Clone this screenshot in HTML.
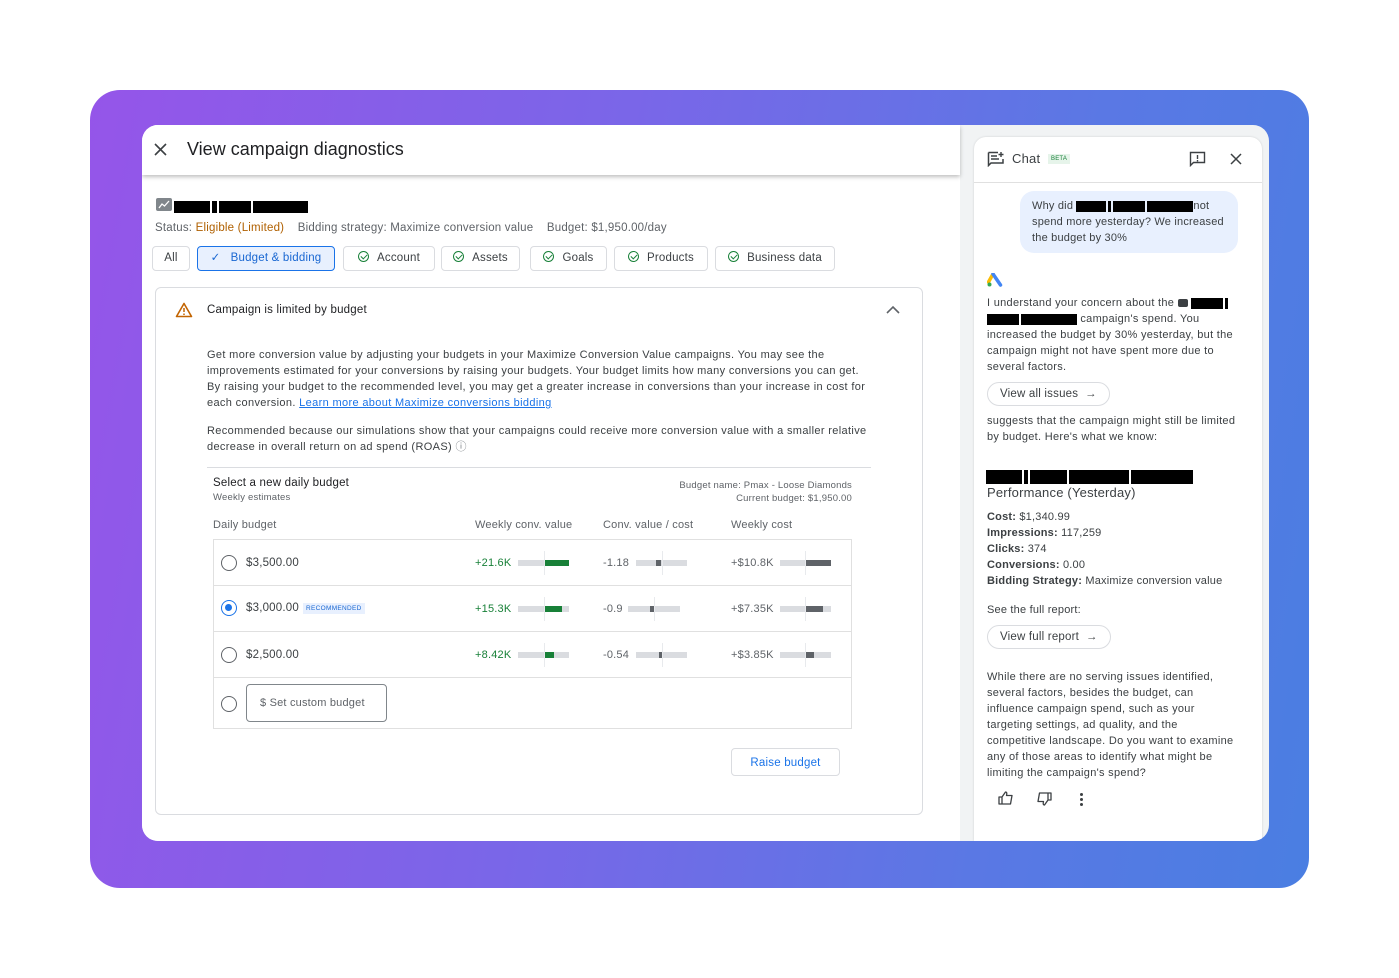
<!DOCTYPE html>
<html><head><meta charset="utf-8"><style>
*{box-sizing:border-box;margin:0;padding:0}
body{width:1399px;height:978px;background:#fff;font-family:"Liberation Sans",sans-serif;color:#3c4043;position:relative;overflow:hidden;letter-spacing:.2px}
.a{position:absolute}
.bg{left:90px;top:90px;width:1219px;height:798px;border-radius:30px;background:linear-gradient(100deg,#9555e9 0%,#7a66e8 40%,#5a78e4 75%,#4a7ee2 100%)}
.panel{left:142px;top:125px;width:1127px;height:716px;border-radius:16px;background:#f1f3f4;overflow:hidden}
.left{left:0;top:0;width:818px;height:716px;background:#fff}
.hdr{left:0;top:0;width:818px;height:50px;box-shadow:0 2px 4px rgba(0,0,0,.25);background:#fff}
.t{font-size:12px;color:#3c4043;white-space:nowrap}
.chip{position:absolute;top:121px;height:25px;border:1px solid #dadce0;border-radius:4px;font-size:11.5px;line-height:23px;text-align:center;color:#3c4043;white-space:nowrap}
.chk{display:inline-block;width:11px;height:11px;border:1.3px solid #188038;border-radius:50%;vertical-align:-1px;margin-right:8px;position:relative}
.chk:after{content:"";position:absolute;left:2.5px;top:1px;width:3px;height:5px;border:solid #188038;border-width:0 1.2px 1.2px 0;transform:rotate(45deg)}
.blk{background:#000;display:inline-block;height:12px;vertical-align:middle}
.row{position:absolute;left:71px;width:639px;height:46px;border-top:1px solid #e0e0e0}
.radio{position:absolute;left:8px;width:16px;height:16px;border:1.5px solid #5f6368;border-radius:50%}
.bar{position:absolute;height:6px;background:#dadce0}
.bar i{position:absolute;top:0;height:6px;display:block}
.tick{position:absolute;width:1px;height:24px;background:#e8eaed;top:-9px}
.chat{left:832px;top:12px;width:288px;height:704px;background:#fff;border-radius:12px 12px 0 0;box-shadow:0 0 2px rgba(0,0,0,.15)}
.ct{font-size:11px;line-height:16px;color:#3c4043}
.pill{position:absolute;height:24px;border:1px solid #dadce0;border-radius:12px;font-size:11.5px;line-height:22px;padding:0 12px;color:#3c4043}
</style></head><body>
<div class="a bg"></div>
<div class="a panel">
 <div class="a left">
  <div class="a hdr">
   <svg class="a" style="left:12px;top:18px" width="13" height="13" viewBox="0 0 13 13"><path d="M1 1L12 12M12 1L1 12" stroke="#3c4043" stroke-width="1.6"/></svg>
   <div class="a" style="left:45px;top:14px;font-size:18px;color:#202124;letter-spacing:0">View campaign diagnostics</div>
  </div>
  <svg class="a" style="left:14px;top:73px" width="16" height="13" viewBox="0 0 16 13"><rect width="16" height="13" rx="2" fill="#80868b"/><path d="M3 10L6 6L8.5 8L13 3" fill="none" stroke="#fff" stroke-width="1.3"/></svg>
  <div class="a" style="left:32px;top:73px"><span class="blk" style="width:36px"></span><span class="blk" style="width:5px;margin-left:2px"></span><span class="blk" style="width:32px;margin-left:2px"></span><span class="blk" style="width:55px;margin-left:2px"></span></div>
  <div class="a t" style="left:13px;top:97px;font-size:11.5px;color:#5f6368">Status: <span style="color:#b06000">Eligible (Limited)</span> &nbsp;&nbsp; Bidding strategy: Maximize conversion value &nbsp;&nbsp; Budget: $1,950.00/day</div>
  <div class="chip" style="left:10px;width:38px">All</div>
  <div class="chip" style="left:55px;width:138px;background:#e8f0fe;border-color:#1a73e8;color:#1967d2">✓&nbsp;&nbsp; Budget &amp; bidding</div>
  <div class="chip" style="left:201px;width:92px"><span class="chk"></span>Account</div>
  <div class="chip" style="left:299px;width:79px"><span class="chk"></span>Assets</div>
  <div class="chip" style="left:388px;width:77px"><span class="chk"></span>Goals</div>
  <div class="chip" style="left:472px;width:94px"><span class="chk"></span>Products</div>
  <div class="chip" style="left:573px;width:120px"><span class="chk"></span>Business data</div>
  <div class="a" style="left:13px;top:162px;width:768px;height:528px;border:1px solid #dadce0;border-radius:6px"></div>
  <svg class="a" style="left:33px;top:177px" width="18" height="16" viewBox="0 0 18 16"><path d="M9 1.5L16.5 14.5H1.5Z" fill="none" stroke="#c26401" stroke-width="1.6" stroke-linejoin="round"/><path d="M9 6V10M9 11.5V13" stroke="#c26401" stroke-width="1.5"/></svg>
  <div class="a t" style="left:65px;top:179px;font-size:11.5px;color:#202124">Campaign is limited by budget</div>
  <svg class="a" style="left:744px;top:180px" width="14" height="9" viewBox="0 0 14 9"><path d="M1 8L7 2L13 8" fill="none" stroke="#5f6368" stroke-width="1.6"/></svg>
  <div class="a ct" style="left:65px;top:222px;width:665px;font-size:11px;line-height:16px;letter-spacing:.35px">Get more conversion value by adjusting your budgets in your Maximize Conversion Value campaigns. You may see the improvements estimated for your conversions by raising your budgets. Your budget limits how many conversions you can get. By raising your budget to the recommended level, you may get a greater increase in conversions than your increase in cost for each conversion. <span style="color:#1a73e8;text-decoration:underline">Learn more about Maximize conversions bidding</span></div>
  <div class="a ct" style="left:65px;top:298px;width:665px;letter-spacing:.35px">Recommended because our simulations show that your campaigns could receive more conversion value with a smaller relative decrease in overall return on ad spend (ROAS) <span style="color:#80868b">ⓘ</span></div>
  <div class="a" style="left:65px;top:342px;width:664px;height:1px;background:#dadce0"></div>
  <div class="a t" style="left:71px;top:352px;font-size:11.5px;color:#202124">Select a new daily budget</div>
  <div class="a t" style="left:71px;top:367px;font-size:9.5px;color:#5f6368">Weekly estimates</div>
  <div class="a t" style="left:480px;top:354px;width:230px;text-align:right;font-size:9.5px;line-height:13px;color:#5f6368">Budget name: Pmax - Loose Diamonds<br>Current budget: $1,950.00</div>
  <div class="a t" style="left:71px;top:394px;font-size:11px;color:#5f6368">Daily budget</div>
  <div class="a t" style="left:333px;top:394px;font-size:11px;color:#5f6368">Weekly conv. value</div>
  <div class="a t" style="left:461px;top:394px;font-size:11px;color:#5f6368">Conv. value / cost</div>
  <div class="a t" style="left:589px;top:394px;font-size:11px;color:#5f6368">Weekly cost</div>
  <div class="a" style="left:71px;top:414px;width:639px;height:190px;border:1px solid #e0e0e0;border-top:none"></div>

  <div class="row" style="top:414px">
   <div class="radio" style="top:15px"></div>
   <div class="a t" style="left:33px;top:17px;font-size:11.5px">$3,500.00</div>
   <div class="a t" style="left:262px;top:17px;font-size:11px;color:#188038">+21.6K</div>
   <div class="bar" style="left:305px;top:20px;width:51px"><i style="left:26px;width:25px;background:#188038"></i><div class="tick" style="left:26px"></div></div>
   <div class="a t" style="left:390px;top:17px;font-size:11px;color:#5f6368">-1.18</div>
   <div class="bar" style="left:423px;top:20px;width:51px"><i style="left:20px;width:5px;background:#5f6368"></i><div class="tick" style="left:26px"></div></div>
   <div class="a t" style="left:518px;top:17px;font-size:11px;color:#5f6368">+$10.8K</div>
   <div class="bar" style="left:567px;top:20px;width:51px"><i style="left:25px;width:26px;background:#5f6368"></i><div class="tick" style="left:25px"></div></div>
  </div>
  <div class="row" style="top:460px">
   <div class="radio" style="top:14px;border-color:#1a73e8"><div style="position:absolute;left:3px;top:3px;width:7px;height:7px;border-radius:50%;background:#1a73e8"></div></div>
   <div class="a t" style="left:33px;top:16px;font-size:11.5px">$3,000.00</div>
   <div class="a" style="left:90px;top:17px;background:#e8f0fe;color:#1967d2;font-size:6.5px;letter-spacing:.3px;padding:2px 3px">RECOMMENDED</div>
   <div class="a t" style="left:262px;top:17px;font-size:11px;color:#188038">+15.3K</div>
   <div class="bar" style="left:305px;top:20px;width:51px"><i style="left:26px;width:18px;background:#188038"></i><div class="tick" style="left:26px"></div></div>
   <div class="a t" style="left:390px;top:17px;font-size:11px;color:#5f6368">-0.9</div>
   <div class="bar" style="left:415px;top:20px;width:52px"><i style="left:22px;width:4px;background:#5f6368"></i><div class="tick" style="left:26px"></div></div>
   <div class="a t" style="left:518px;top:17px;font-size:11px;color:#5f6368">+$7.35K</div>
   <div class="bar" style="left:567px;top:20px;width:51px"><i style="left:25px;width:18px;background:#5f6368"></i><div class="tick" style="left:25px"></div></div>
  </div>
  <div class="row" style="top:506px">
   <div class="radio" style="top:15px"></div>
   <div class="a t" style="left:33px;top:17px;font-size:11.5px">$2,500.00</div>
   <div class="a t" style="left:262px;top:17px;font-size:11px;color:#188038">+8.42K</div>
   <div class="bar" style="left:305px;top:20px;width:51px"><i style="left:26px;width:10px;background:#188038"></i><div class="tick" style="left:26px"></div></div>
   <div class="a t" style="left:390px;top:17px;font-size:11px;color:#5f6368">-0.54</div>
   <div class="bar" style="left:423px;top:20px;width:51px"><i style="left:23px;width:3px;background:#5f6368"></i><div class="tick" style="left:26px"></div></div>
   <div class="a t" style="left:518px;top:17px;font-size:11px;color:#5f6368">+$3.85K</div>
   <div class="bar" style="left:567px;top:20px;width:51px"><i style="left:25px;width:9px;background:#5f6368"></i><div class="tick" style="left:25px"></div></div>
  </div>
  <div class="row" style="top:552px;height:52px">
   <div class="radio" style="top:18px"></div>
   <div class="a t" style="left:33px;top:6px;width:141px;height:38px;border:1px solid #80868b;border-radius:4px;font-size:11px;line-height:36px;padding-left:13px;color:#5f6368">$ Set custom budget</div>
  </div>
  <div class="a" style="left:589px;top:623px;width:109px;height:28px;border:1px solid #dadce0;border-radius:4px;font-size:11.5px;line-height:28px;text-align:center;color:#1a73e8">Raise budget</div>
 </div>

 <div class="a chat">
  <svg class="a" style="left:13px;top:14px" width="18" height="16" viewBox="0 0 18 16"><path d="M1.5 1.5H11M1.5 1.5V14.5L4 12H16V8" fill="none" stroke="#3c4043" stroke-width="1.5"/><path d="M4 5H10M4 8H12" stroke="#3c4043" stroke-width="1.4"/><path d="M14 1V6M11.5 3.5H16.5" stroke="#3c4043" stroke-width="1.4"/></svg>
  <div class="a" style="left:38px;top:14px;font-size:13px;color:#3c4043">Chat</div>
  <div class="a" style="left:74px;top:17px;background:#e6f4ea;color:#188038;font-size:6px;padding:2px 3px">BETA</div>
  <svg class="a" style="left:215px;top:14px" width="17" height="16" viewBox="0 0 17 16"><path d="M1.5 1.5H15.5V11.5H4.5L1.5 14.5Z" fill="none" stroke="#3c4043" stroke-width="1.4"/><path d="M8.5 4V8M8.5 9V10.5" stroke="#3c4043" stroke-width="1.4"/></svg>
  <svg class="a" style="left:256px;top:16px" width="12" height="12" viewBox="0 0 12 12"><path d="M1 1L11 11M11 1L1 11" stroke="#3c4043" stroke-width="1.5"/></svg>
  <div class="a" style="left:0;top:45px;width:288px;height:1px;background:#e0e0e0"></div>
  <div class="a ct" style="left:46px;top:54px;width:218px;height:62px;background:#e8f0fe;border-radius:14px;padding:7px 12px;line-height:16px">Why did <span class="blk" style="width:30px;height:11px"></span><span class="blk" style="width:3px;height:11px;margin-left:2px"></span><span class="blk" style="width:32px;height:11px;margin-left:2px"></span><span class="blk" style="width:46px;height:11px;margin-left:2px"></span>not spend more yesterday? We increased the budget by 30%</div>
  <svg class="a" style="left:13px;top:136px" width="16" height="14" viewBox="0 0 16 14"><path d="M6 1L1.5 9" stroke="#fbbc04" stroke-width="3.5" stroke-linecap="round"/><path d="M6 1L13.5 12" stroke="#4285f4" stroke-width="3.5" stroke-linecap="round"/><circle cx="2.5" cy="11.5" r="2" fill="#34a853"/></svg>
  <div class="a ct" style="left:13px;top:158px;width:252px;letter-spacing:.3px">I understand your concern about the <span class="blk" style="width:10px;height:8px;background:#3c4043;border-radius:2px"></span> <span class="blk" style="width:32px;height:11px"></span><span class="blk" style="width:3px;height:11px;margin-left:2px"></span><br><span class="blk" style="width:32px;height:11px"></span><span class="blk" style="width:56px;height:11px;margin-left:2px"></span> campaign's spend. You increased the budget by 30% yesterday, but the campaign might not have spent more due to several factors.</div>
  <div class="pill" style="left:13px;top:245px">View all issues &nbsp;→</div>
  <div class="a ct" style="left:13px;top:276px;width:256px;letter-spacing:.3px">suggests that the campaign might still be limited by budget. Here's what we know:</div>
  <div class="a" style="left:12px;top:331px"><span class="blk" style="width:36px;height:14px"></span><span class="blk" style="width:4px;height:14px;margin-left:2px"></span><span class="blk" style="width:37px;height:14px;margin-left:2px"></span><span class="blk" style="width:60px;height:14px;margin-left:2px"></span><span class="blk" style="width:62px;height:14px;margin-left:2px"></span></div>
  <div class="a" style="left:13px;top:348px;font-size:13px;color:#3c4043">Performance (Yesterday)</div>
  <div class="a ct" style="left:13px;top:372px"><b>Cost:</b> $1,340.99<br><b>Impressions:</b> 117,259<br><b>Clicks:</b> 374<br><b>Conversions:</b> 0.00<br><b>Bidding Strategy:</b> Maximize conversion value</div>
  <div class="a ct" style="left:13px;top:465px">See the full report:</div>
  <div class="pill" style="left:13px;top:488px">View full report &nbsp;→</div>
  <div class="a ct" style="left:13px;top:532px;width:250px;letter-spacing:.3px">While there are no serving issues identified, several factors, besides the budget, can influence campaign spend, such as your targeting settings, ad quality, and the competitive landscape. Do you want to examine any of those areas to identify what might be limiting the campaign's spend?</div>
  <svg class="a" style="left:24px;top:654px" width="16" height="14" viewBox="0 0 16 14"><path d="M1 6H4V13H1ZM4 6L7.5 1C9 1 9 2.5 8.5 4.5H14L12.5 13H4" fill="none" stroke="#3c4043" stroke-width="1.3" stroke-linejoin="round"/></svg>
  <svg class="a" style="left:62px;top:655px" width="16" height="14" viewBox="0 0 16 14"><path d="M15 8H12V1H15ZM12 8L8.5 13C7 13 7 11.5 7.5 9.5H2L3.5 1H12" fill="none" stroke="#3c4043" stroke-width="1.3" stroke-linejoin="round"/></svg>
  <div class="a" style="left:106px;top:656px;width:3px;line-height:0"><div style="width:3px;height:3px;background:#3c4043;border-radius:50%;margin-bottom:2px"></div><div style="width:3px;height:3px;background:#3c4043;border-radius:50%;margin-bottom:2px"></div><div style="width:3px;height:3px;background:#3c4043;border-radius:50%"></div></div>
 </div>
</div>
</body></html>
